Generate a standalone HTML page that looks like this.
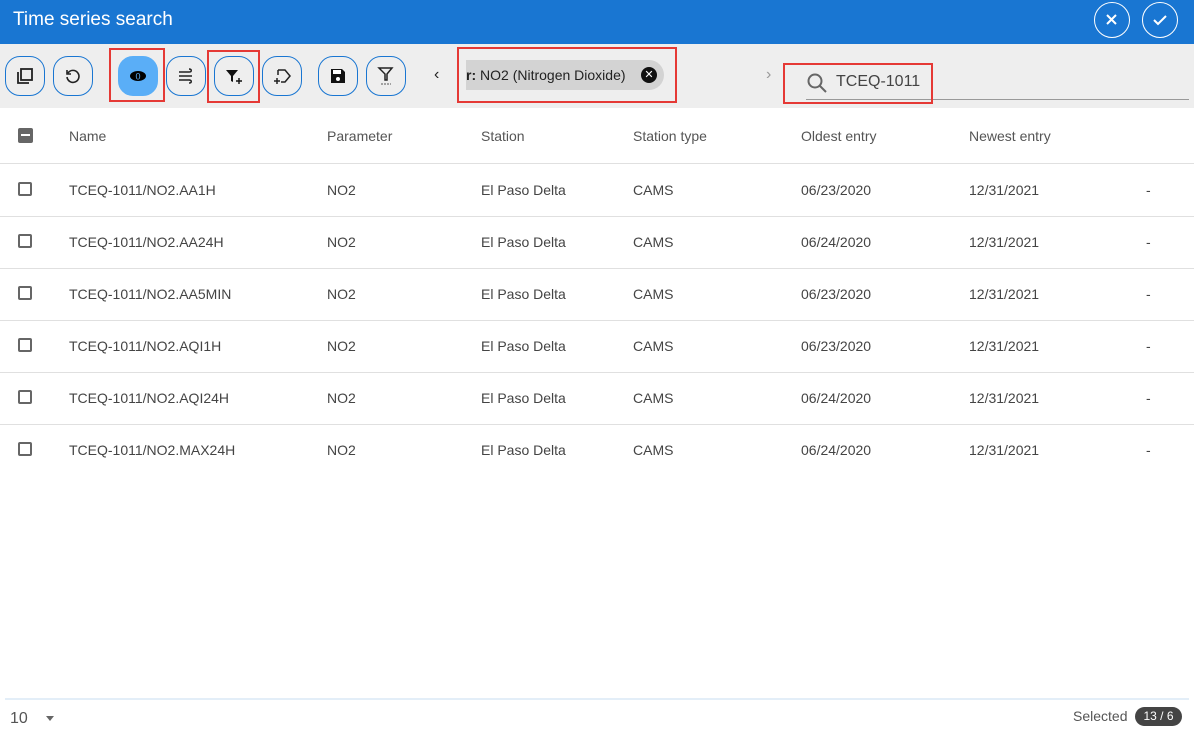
<!DOCTYPE html><html><head><style>
body{margin:0;width:1194px;height:731px;overflow:hidden;font-family:"Liberation Sans",sans-serif;background:#fff;position:relative;color:#333}
.hd{position:absolute;left:0;top:0;width:1194px;height:44px;background:#1976d2;color:#fff}
.hd .t{position:absolute;left:13px;top:9px;font-size:19px}
.cb{position:absolute;top:2px;width:36px;height:36px;border:1.5px solid #fff;border-radius:50%;box-sizing:border-box}
.tb{position:absolute;left:0;top:44px;width:1194px;height:64px;background:#eee}
.b{position:absolute;top:12px;width:40px;height:40px;border:1px solid #1976d2;border-radius:15px;box-sizing:border-box;display:flex;align-items:center;justify-content:center}
.red{position:absolute;border:2px solid #e53935;box-sizing:border-box}
.abs{position:absolute}
.row{position:absolute;left:0;width:1194px;height:52px;border-bottom:1px solid #e0e0e0;font-size:14px;color:#444}
.row span{position:absolute;top:18px}
.ck{position:absolute;left:18px;top:18px;width:14px;height:14px;border:2px solid #666;border-radius:2px;box-sizing:border-box}
</style></head><body>
<div class="hd"><div class="t">Time series search</div>
<div class="cb" style="left:1094px;top:2px"><svg width="33" height="33" viewBox="0 0 33 33"><path d="M12 12l9 9M21 12l-9 9" stroke="#fff" stroke-width="2"/></svg></div>
<div class="cb" style="left:1142px;top:2px"><svg width="33" height="33" viewBox="0 0 33 33"><path d="M11 17l4 4 8-8" stroke="#fff" stroke-width="2" fill="none"/></svg></div></div>
<div class="tb">
<div class="b" style="left:5px"><svg width="18" height="18" viewBox="0 0 18 18"><rect x="5" y="2" width="11" height="11" fill="none" stroke="#222" stroke-width="1.8"/><path d="M2 5v11h11" fill="none" stroke="#222" stroke-width="1.8"/></svg></div>
<div class="b" style="left:53px"><svg width="18" height="18" viewBox="0 0 18 18"><path d="M4 6A6 6 0 1 1 3 10M3 3v4h4" fill="none" stroke="#222" stroke-width="1.6"/></svg></div>
<div class="b" style="left:118px;background:#5aaef7;border-color:#5aaef7"><svg width="18" height="12"><ellipse cx="9" cy="6" rx="8" ry="5" fill="#000"/><text x="9" y="9.5" font-size="9" fill="#5aaef7" text-anchor="middle">0</text></svg></div>
<div class="b" style="left:166px"><svg width="18" height="18" viewBox="0 0 18 18"><path d="M2 5h11M2 9h13M2 13h11M12 2c3 0 3 3 0 3M12 13c3 0 3 3 0 3" fill="none" stroke="#222" stroke-width="1.5"/></svg></div>
<div class="b" style="left:214px"><svg width="18" height="18" viewBox="0 0 18 18"><path d="M1 3h12l-5 6v6l-2-1V9z" fill="#111"/><path d="M14 11v6M11 14h6" stroke="#111" stroke-width="1.4"/></svg></div>
<div class="b" style="left:262px"><svg width="20" height="20" viewBox="0 0 20 20"><path d="M6 4h7l5 6-5 6H9M6 4v5" fill="none" stroke="#222" stroke-width="1.5"/><path d="M5 12v6M2 15h6" stroke="#222" stroke-width="1.5"/></svg></div>
<div class="b" style="left:318px"><svg width="16" height="16" viewBox="0 0 16 16"><path d="M1 1h11l3 3v11H1z" fill="#111"/><rect x="3" y="2" width="8" height="4" fill="#fff"/><circle cx="8" cy="11" r="2" fill="#fff"/></svg></div>
<div class="b" style="left:366px"><svg width="18" height="20" viewBox="0 0 18 20"><path d="M2 2h13l-5 6v6H8V8z" fill="none" stroke="#222" stroke-width="1.5"/><path d="M4 18h10" stroke="#555" stroke-dasharray="2 1"/></svg></div>
<div class="abs" style="left:434px;top:22px;font-size:16px;color:#222">‹</div>
<div class="abs" style="left:466px;top:16px;width:198px;height:30px;background:#d3d3d3;border-radius:0 15px 15px 0;font-size:14px;line-height:30px;color:#222"><b style="font-weight:bold">r:</b> NO2 (Nitrogen Dioxide)<span class="abs" style="left:175px;top:7px;width:16px;height:16px;border-radius:50%;background:#111;color:#fff;font-size:11px;line-height:16px;text-align:center">✕</span></div>
<div class="abs" style="left:766px;top:22px;font-size:16px;color:#999">›</div>
<svg class="abs" style="left:806px;top:28px" width="22" height="22" viewBox="0 0 22 22"><circle cx="9" cy="9" r="6.5" fill="none" stroke="#666" stroke-width="2"/><path d="M14 14l6 6" stroke="#666" stroke-width="2"/></svg>
<div class="abs" style="left:836px;top:29px;font-size:16px;color:#444">TCEQ-1011</div>
<div class="abs" style="left:806px;top:55px;width:383px;height:1px;background:#999"></div>
</div>
<div class="red" style="left:109px;top:48px;width:56px;height:54px"></div>
<div class="red" style="left:207px;top:50px;width:53px;height:53px"></div>
<div class="red" style="left:457px;top:47px;width:220px;height:56px"></div>
<div class="red" style="left:783px;top:63px;width:150px;height:41px"></div>
<div class="row" style="top:108px;height:55px;color:#555">
<div class="abs" style="left:18px;top:20px;width:15px;height:15px;background:#666;border-radius:2px"><div class="abs" style="left:3px;top:6px;width:9px;height:2px;background:#fff"></div></div>
<span style="left:69px;top:20px">Name</span><span style="left:327px;top:20px">Parameter</span><span style="left:481px;top:20px">Station</span><span style="left:633px;top:20px">Station type</span><span style="left:801px;top:20px">Oldest entry</span><span style="left:969px;top:20px">Newest entry</span></div>
<div class="row" style="top:164px"><div class="ck"></div><span style="left:69px">TCEQ-1011/NO2.AA1H</span><span style="left:327px">NO2</span><span style="left:481px">El Paso Delta</span><span style="left:633px">CAMS</span><span style="left:801px">06/23/2020</span><span style="left:969px">12/31/2021</span><span style="left:1146px">-</span></div>
<div class="row" style="top:216px"><div class="ck"></div><span style="left:69px">TCEQ-1011/NO2.AA24H</span><span style="left:327px">NO2</span><span style="left:481px">El Paso Delta</span><span style="left:633px">CAMS</span><span style="left:801px">06/24/2020</span><span style="left:969px">12/31/2021</span><span style="left:1146px">-</span></div>
<div class="row" style="top:268px"><div class="ck"></div><span style="left:69px">TCEQ-1011/NO2.AA5MIN</span><span style="left:327px">NO2</span><span style="left:481px">El Paso Delta</span><span style="left:633px">CAMS</span><span style="left:801px">06/23/2020</span><span style="left:969px">12/31/2021</span><span style="left:1146px">-</span></div>
<div class="row" style="top:320px"><div class="ck"></div><span style="left:69px">TCEQ-1011/NO2.AQI1H</span><span style="left:327px">NO2</span><span style="left:481px">El Paso Delta</span><span style="left:633px">CAMS</span><span style="left:801px">06/23/2020</span><span style="left:969px">12/31/2021</span><span style="left:1146px">-</span></div>
<div class="row" style="top:372px"><div class="ck"></div><span style="left:69px">TCEQ-1011/NO2.AQI24H</span><span style="left:327px">NO2</span><span style="left:481px">El Paso Delta</span><span style="left:633px">CAMS</span><span style="left:801px">06/24/2020</span><span style="left:969px">12/31/2021</span><span style="left:1146px">-</span></div>
<div class="row" style="top:424px;border-bottom:none"><div class="ck"></div><span style="left:69px">TCEQ-1011/NO2.MAX24H</span><span style="left:327px">NO2</span><span style="left:481px">El Paso Delta</span><span style="left:633px">CAMS</span><span style="left:801px">06/24/2020</span><span style="left:969px">12/31/2021</span><span style="left:1146px">-</span></div>
<div class="abs" style="left:5px;top:698px;width:1184px;height:2px;background:#e3eef8"></div>
<div class="abs" style="left:10px;top:710px;font-size:16px;color:#555">10</div>
<div class="abs" style="left:46px;top:716px;width:0;height:0;border:4px solid transparent;border-top:5px solid #666"></div>
<div class="abs" style="left:1073px;top:708px;font-size:14px;color:#555">Selected</div>
<div class="abs" style="left:1135px;top:707px;width:47px;height:19px;border-radius:10px;background:#444;color:#fff;font-size:12px;line-height:19px;text-align:center">13 / 6</div>
</body></html>
